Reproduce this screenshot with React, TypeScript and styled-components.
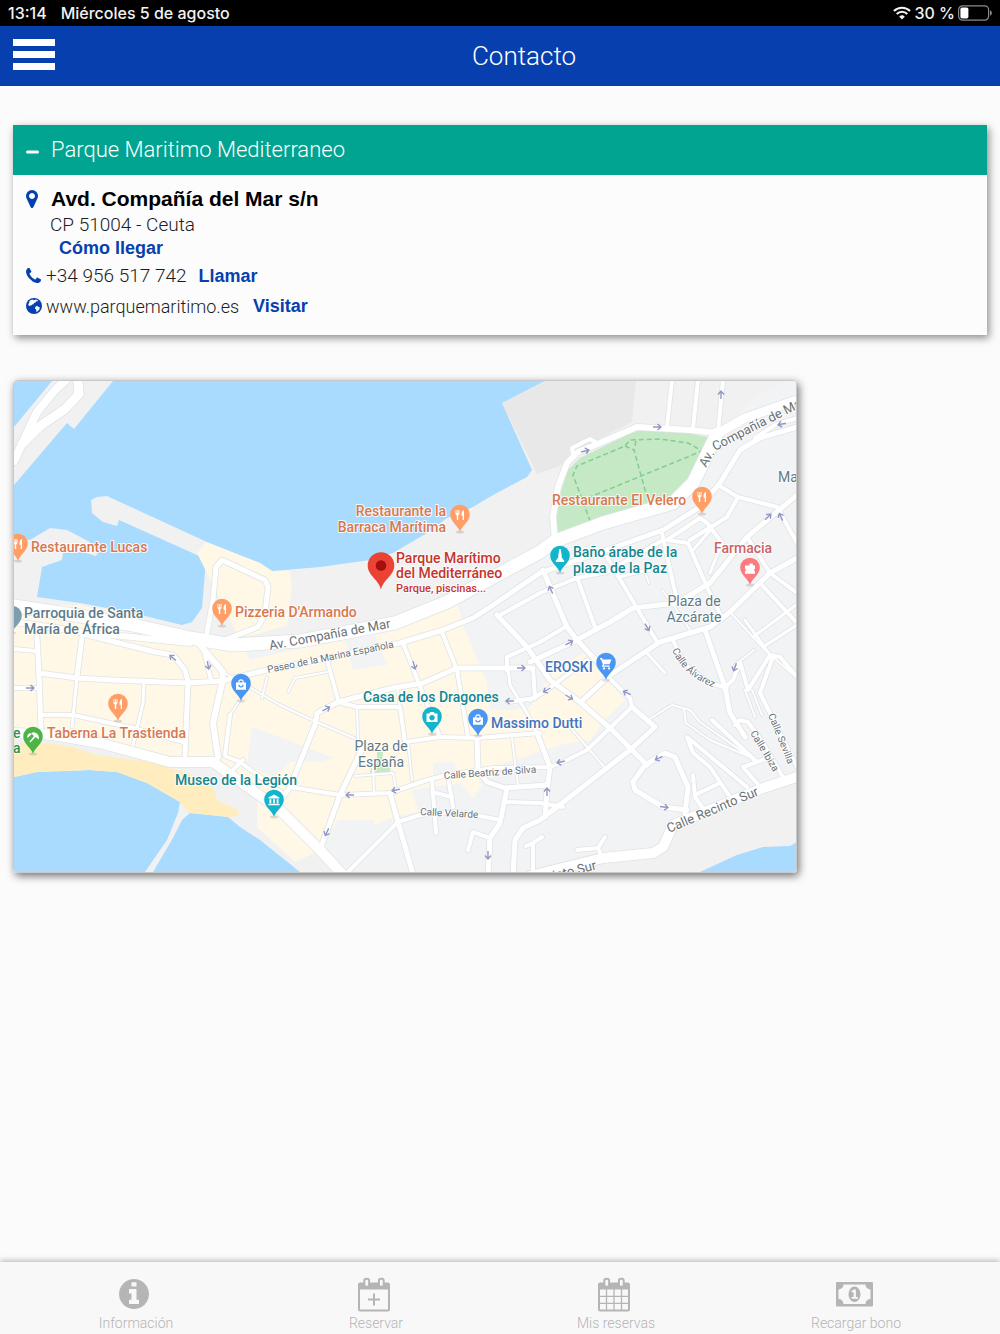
import React, { useState } from "react";
import styled, { createGlobalStyle } from "styled-components";

const LIGHT = `Roboto, "Liberation Sans", sans-serif`;
const BOLD = `"Liberation Sans", Arial, sans-serif`;

const Global = createGlobalStyle`
  *, *::before, *::after { box-sizing: border-box; }
  body { margin: 0; background: #fbfbfb; font-family: ${LIGHT}; color: #1d1d1d; }
`;

const Screen = styled.div`
  min-height: 100vh;
  display: flex;
  flex-direction: column;
`;

const StatusBar = styled.div`
  height: 26px;
  padding: 0 8px;
  display: flex;
  align-items: center;
  gap: 14px;
  background: #000;
  color: #f2f2f2;
  font: 500 16px/26px Inter, Roboto, sans-serif;
`;

const StatusRight = styled.div`
  margin-left: auto;
  display: flex;
  align-items: center;
  gap: 3px;
`;

const NavBar = styled.header`
  height: 60px;
  padding: 0 12px;
  display: grid;
  grid-template-columns: 44px 1fr;
  align-items: center;
  background: #0740ae;
  color: #fff;
`;

const MenuButton = styled.button`
  border: 0;
  padding: 0 1px;
  height: 34px;
  width: 44px;
  background: none;
  display: flex;
  flex-direction: column;
  gap: 5px;
  cursor: pointer;
`;

const MenuLine = styled.span`
  display: block;
  width: 42px;
  height: 7px;
  background: #fff;
`;

const NavTitle = styled.h1`
  margin: 0;
  padding-left: 4px;
  text-align: center;
  font-size: 26px;
  line-height: 60px;
  font-weight: 300;
`;

const Main = styled.main`
  flex: 1;
  padding: 39px 13px 60px;
  display: flex;
  flex-direction: column;
  gap: 45px;
`;

const Card = styled.section`
  background: #fcfcfc;
  box-shadow: 2px 3px 8px rgba(0, 0, 0, 0.45);
`;

const CardHeading = styled.h2`
  margin: 0;
`;

const CardToggle = styled.button`
  width: 100%;
  height: 50px;
  border: 0;
  padding: 0 13px;
  display: flex;
  align-items: center;
  gap: 12px;
  background: #00a491;
  color: #fff;
  font: 300 22px/50px ${LIGHT};
  text-align: left;
  cursor: pointer;
`;

const CardBody = styled.div`
  padding: 11px 13px 14px;
`;

const Row = styled.div<{ $indent?: number; $height?: number; $size?: number }>`
  display: flex;
  align-items: center;
  height: ${(p) => p.$height ?? 30}px;
  padding-left: ${(p) => p.$indent ?? 0}px;
  font-weight: 300;
  font-size: ${(p) => p.$size ?? 19}px;
`;

const Icon = styled.span<{ $width: number }>`
  flex: none;
  width: ${(p) => p.$width}px;
  display: inline-flex;
`;

const Street = styled.strong`
  font: 700 21px/24px ${BOLD};
  color: #000;
`;

const Action = styled.a<{ $gap?: number }>`
  margin-left: ${(p) => p.$gap ?? 0}px;
  font: 700 18px/24px ${BOLD};
  color: #0740ae;
  text-decoration: none;
`;

const MapFrame = styled.figure`
  margin: 0;
  width: 100%;
  max-width: 784px;
  border: 1px solid #c9c9c9;
  border-radius: 4px;
  overflow: hidden;
  box-shadow: 2px 3px 9px rgba(0, 0, 0, 0.55);
`;

const MapSvg = styled.svg`
  display: block;
  width: 100%;
  height: auto;
`;

const MapText = styled.text<{ $size?: number; $weight?: number }>`
  font-family: Roboto, sans-serif;
  font-size: ${(p) => p.$size ?? 14}px;
  font-weight: ${(p) => p.$weight ?? 500};
  paint-order: stroke;
  stroke: rgba(255, 255, 255, 0.85);
  stroke-width: 2px;
  stroke-linejoin: round;
`;

const TabBar = styled.nav`
  height: 72px;
  padding: 0 24px 0 16px;
  display: grid;
  grid-template-columns: repeat(4, 1fr);
  background: #f8f8f8;
  box-shadow: 0 -1px 6px rgba(0, 0, 0, 0.3);
`;

const Tab = styled.button`
  border: 0;
  padding: 13px 0 0;
  background: none;
  display: flex;
  flex-direction: column;
  align-items: center;
  color: #b5b5b5;
  font: 300 14px/20px ${LIGHT};
  cursor: pointer;
`;

const TabIcon = styled.span`
  display: block;
  height: 38px;
  padding-right: 4px;
`;

const POINTS = {
  marker:
    "M1152 640q0-106-75-181t-181-75-181 75-75 181 75 181 181 75 181-75 75-181zm256 0q0 109-33 179l-364 774q-16 33-47.5 52t-67.5 19-67.5-19-46.5-52l-365-774q-33-70-33-179 0-212 150-362t362-150 362 150 150 362z",
  phone:
    "M1600 1240q0 27-10 70.5t-21 68.5q-21 50-122 106-94 51-186 51-27 0-52.5-3.5t-57.5-12.5-47.5-14.5-55.5-20.5-49-18q-98-35-175-83-128-79-264.5-215.5t-215.5-264.5q-48-77-83-175-3-9-18-49t-20.5-55.5-14.5-47.5-12.5-57.5-3.5-52.5q0-92 51-186 56-101 106-122 25-11 68.5-21t70.5-10q14 0 21 3 18 6 53 76 11 19 30 54t35 63.5 31 53.5q3 4 17.5 25t21.5 35.5 7 28.5q0 20-28.5 50t-62 55-62 53-28.5 46q0 9 5 22.5t8.5 20.5 14 24 11.5 19q76 137 174 235t235 174q2 1 19 11.5t24 14 20.5 8.5 22.5 5q18 0 46-28.5t53-62 55-62 50-28.5q14 0 28.5 7t35.5 21.5 25 17.5q25 15 53.5 31t63.5 35 54 30q70 35 76 53 3 7 3 21z",
  info:
    "M1152 1376v-160q0-14-9-23t-23-9h-96v-512q0-14-9-23t-23-9h-320q-14 0-23 9t-9 23v160q0 14 9 23t23 9h96v320h-96q-14 0-23 9t-9 23v160q0 14 9 23t23 9h448q14 0 23-9t9-23zm-128-896v-160q0-14-9-23t-23-9h-192q-14 0-23 9t-9 23v160q0 14 9 23t23 9h192q14 0 23-9t9-23zm640 416q0 209-103 385.5t-279.5 279.5-385.5 103-385.5-103-279.5-279.5-103-385.5 103-385.5 279.5-279.5 385.5-103 385.5 103 279.5 279.5 103 385.5z",
};

const MarkerIcon = () => (
  <svg width="12" height="18" viewBox="384 128 1024 1536" fill="#0740ae" aria-hidden="true">
    <path d={POINTS.marker} />
  </svg>
);

const PhoneIcon = () => (
  <svg width="15" height="15" viewBox="192 128 1408 1408" fill="#0740ae" aria-hidden="true">
    <path d={POINTS.phone} />
  </svg>
);

const GlobeIcon = () => (
  <svg width="16" height="16" viewBox="0 0 16 16" aria-hidden="true">
    <circle cx="8" cy="8" r="8" fill="#0740ae" />
    <path
      d="M4.600 2 7.200 1.600 7.600 2.600 9.800 1.600 12.200 2.500 11.200 3.400 10 3.300 9.600 4.600 8 5 7.500 6.300 6 6.600 5.400 7.600 4.300 7.300 3.700 8.200 2.600 7.600 2.400 6 3.400 4.600 3 4zM9.600 8.400 11.300 7.800 12 8.800 13.800 9.300 13.400 11.600 11.400 13.600 10.200 13.800 10.400 12 9 10.600z"
      fill="#fcfcfc"
    />
  </svg>
);

const WifiIcon = () => (
  <svg width="18" height="14" viewBox="0 0 18 14" fill="none" stroke="#f2f2f2" strokeWidth="2.1" aria-hidden="true">
    <path d="M.9 5.1a11.5 11.5 0 0 1 16.2 0M3.7 8a7.5 7.5 0 0 1 10.600 0" />
    <path d="M9 13.500 6.200 10.700a4 4 0 0 1 5.600 0z" fill="#f2f2f2" stroke="none" />
  </svg>
);

const BatteryIcon = () => (
  <svg width="34" height="16" viewBox="0 0 34 16" aria-hidden="true">
    <rect x=".6" y=".8" width="30" height="14.400" rx="4" fill="none" stroke="#8a8a8a" strokeWidth="1.200" />
    <rect x="2.400" y="2.600" width="8" height="10.800" rx="1.600" fill="#fff" />
    <path d="M32 5.200a3 3 0 0 1 0 5.600z" fill="#8a8a8a" />
  </svg>
);

const InfoIcon = () => (
  <svg width="30" height="38" viewBox="0 0 30 38" fill="#b5b5b5" aria-hidden="true">
    <svg y="4" width="30" height="30" viewBox="128 128 1536 1536">
      <path d={POINTS.info} />
    </svg>
  </svg>
);

const CalendarFrame = () => (
  <>
    <path
      fillRule="evenodd"
      d="M2 7.500h28a2 2 0 0 1 2 2V34.500a2 2 0 0 1-2 2H2a2 2 0 0 1-2-2V9.500a2 2 0 0 1 2-2zM2 14.500v20h28V14.500z"
    />
    <rect x="6.300" y="3.800" width="4.800" height="8" rx="2" fill="#f8f8f8" stroke="#b5b5b5" strokeWidth="2" />
    <rect x="20.900" y="3.800" width="4.800" height="8" rx="2" fill="#f8f8f8" stroke="#b5b5b5" strokeWidth="2" />
  </>
);

const CalendarPlusIcon = () => (
  <svg width="32" height="38" viewBox="0 0 32 38" fill="#b5b5b5" aria-hidden="true">
    <CalendarFrame />
    <path d="M15 18.500h2v5h5v2h-5v5h-2v-5h-5v-2h5z" />
  </svg>
);

const CalendarGridIcon = () => (
  <svg width="32" height="38" viewBox="0 0 32 38" fill="#b5b5b5" aria-hidden="true">
    <CalendarFrame />
    <path d="M8.500 14v22M16 14v22M23.500 14v22M1 21.300h30M1 28.300h30" stroke="#b5b5b5" strokeWidth="1.300" />
  </svg>
);

const MoneyIcon = () => (
  <svg width="37" height="38" viewBox="0 0 37 38" fill="#b5b5b5" aria-hidden="true">
    <path
      fillRule="evenodd"
      d="M1.200 7h34.600a1.200 1.200 0 0 1 1.200 1.200v22a1.200 1.200 0 0 1-1.200 1.200H1.200A1.200 1.200 0 0 1 0 30.200v-22a1.200 1.200 0 0 1 1.200-1.200zM7.500 9.500a5 5 0 0 1-5 5v9.500a5 5 0 0 1 5 5h22a5 5 0 0 1 5-5V14.500a5 5 0 0 1-5-5z"
    />
    <ellipse cx="18.500" cy="19.200" rx="6" ry="7.800" />
    <path d="M17.700 14.500h2.200V22h2v1.800h-6.300V22h2v-4.800h-2v-1.500q1.600-.2 2.100-1.200z" fill="#f8f8f8" />
  </svg>
);

/* Streets of the map, as [path, width]. */
const ROADS: [string, number][] = [
  ["M14 461 22 444 37 412 55 390 66 380", 8],
  ["M78 380 79 394 65 409 40 426 22 444", 9],
  ["M223 672 280 705 312 720 354 738", 2],
  ["M240 700 230 715", 2],
  ["M267 677 262 698", 2],
  ["M288 692 295 678 327 672", 2],
  ["M357 707 358 740", 2],
  ["M355 776 393 773 396 790M373 765 374 793", 2],
  ["M397 688 400 707M408 742 412 780", 2],
  ["M512 738 518 785", 2],
  ["M648 720 672 705 690 710 700 722 757 762", 2],
  ["M684 710 686 723 710 740 750 757", 2],
  ["M570 727 605 768", 2],
  ["M644 570 649 583", 2],
  ["M662 590 672 603 690 630M730 612 765 650 796 677", 2],
  ["M745 690 755 717M752 690 762 715M754 650 735 665", 2],
  ["M207 632 213 600 216 567 222 560 265 580 268 587 265 614 258 627 217 643", 5],
  ["M83 634 155 652 173 655 185 670 188 682", 5],
  ["M14 649 36 651", 4],
  ["M37 637 39 675 41 730", 5],
  ["M14 688 39 688", 4],
  ["M82 637 77 677", 5],
  ["M77 677 72 727", 3],
  ["M42 715 73 715 133 728 183 742", 4],
  ["M144 683 143 703 133 745", 3],
  ["M188 682 185 755", 5],
  ["M200 645 223 672 222 683 213 723 218 757", 6],
  ["M203 647 211 680", 4],
  ["M230 715 225 755", 4],
  ["M225 756 240 762 282 793M233 770 243 760", 4],
  ["M39 673 77 678 113 680 187 683 222 681 267 670 327 658 400 643 443 630 473 618 490 607 540 573 607 550 663 530 700 507 720 483 740 450 760 438 797 427", 5],
  ["M755 438 775 425 797 418", 4],
  ["M327 660 338 700", 4],
  ["M277 806 290 787 315 725 317 713 338 702 393 688 423 683 457 668 533 668", 5],
  ["M338 702 357 707 400 707 405 742", 4],
  ["M405 742 440 737 477 738 540 733", 4],
  ["M403 643 440 737", 4],
  ["M442 632 457 670 468 737", 4],
  ["M477 738 478 770 487 782 505 788 547 785", 5],
  ["M290 787 340 795 390 793 427 780 447 775 493 768 550 767 563 762 587 750 610 728 632 707 630 698 608 677", 4],
  ["M320 850 340 795 363 747", 5],
  ["M390 793 398 822 413 874", 5],
  ["M348 872 398 822 420 815 460 812 500 820", 4],
  ["M432 780 436 833M432 792 452 797M448 777 453 807", 4],
  ["M507 788 500 823 490 838 488 874", 5],
  ["M490 838 473 832 468 850", 4],
  ["M505 802 540 803 563 807", 4],
  ["M513 874 515 840 523 828 540 820 553 810 630 750 655 727 632 707", 5],
  ["M526 846 533 843 542 837M533 874 533 843", 4],
  ["M537 733 550 767 547 790 545 817", 5],
  ["M497 615 527 647 550 680 580 702 610 728 647 765", 5],
  ["M500 615 540 593 577 578 607 572 663 540", 4],
  ["M507 671 507 657 540 642 567 626", 4],
  ["M508 668 510 685 527 713 537 733", 3],
  ["M533 668 535 698 508 702M530 700 547 690 587 660", 4],
  ["M530 662 573 642 610 622 633 608 677 603 710 583 747 537 797 495", 5],
  ["M543 570 567 627 577 640 608 673", 5],
  ["M578 580 595 627", 4],
  ["M607 557 637 608 657 642", 4],
  ["M618 577 662 567", 3],
  ["M583 700 610 675 660 642 710 627 730 612 770 573 797 558", 5],
  ["M662 533 673 583 678 603", 4],
  ["M667 540 700 518 707 523 722 543M667 540 688 543 707 587 722 618", 4],
  ["M693 550 713 527", 3],
  ["M710 573 722 543", 3],
  ["M718 485 738 497 777 507 797 543M738 497 727 517 690 540", 4],
  ["M747 537 770 573 797 593M760 583 797 623", 4],
  ["M753 637 780 617 797 604M763 647 797 625M745 620 770 655", 3],
  ["M705 630 725 687 730 713 745 737", 5],
  ["M725 687 733 680 740 662 748 690 770 655 780 657 797 677M773 657 760 693 797 767", 4],
  ["M735 725 740 720 748 722 763 743 783 777", 4],
  ["M712 720 757 762 743 767 762 789M757 762 770 757", 4],
  ["M747 787 687 737 693 753 710 767 730 797", 4],
  ["M693 775 695 797 702 807M695 795 720 783", 4],
  ["M645 765 665 753 675 757 688 787 685 813M645 765 633 782 635 790 663 807 687 810", 5],
  ["M647 653 665 673", 3],
  ["M673 640 683 663 710 683 727 688", 4],
  ["M577 850 598 848 605 837M598 848 602 858", 4],
  ["M672 380 667 427M698 380 693 428M723 380 718 432", 4],
  ["M555 540 553 517 558 487 567 463 578 452 600 443 637 427 690 430 717 433", 6],
  ["M573 453 572 448 590 439 597 443", 4],
  ["M14 733 53 735 100 743 170 762 213 762 280 810 320 850 342 874", 10],
  ["M797 777 763 788 673 825 663 847 653 853 603 858 530 876", 10],
  ["M14 606 80 616 133 625 190 638 233 645 300 641 395 623 447 602 540 552 555 541 603 523 673 503 693 483 717 434", 13],
  ["M717 434 745 418 797 400", 9],
  ["M14 622 83 632 190 643", 6],
];

/* One-way arrows, as [x, y, angle]. */
const ARROWS: [number, number, number][] = [
  [30, 688, 0], [173, 658, 220], [208, 665, 80], [326, 709, -28], [414, 665, 75], [350, 795, 180],
  [396, 790, 170], [327, 832, 115], [521, 668, 0], [510, 701, 180], [488, 855, 90], [657, 427, 0],
  [585, 451, -15], [721, 395, -90], [782, 424, 170], [768, 517, -45], [781, 517, -115], [551, 590, -115],
  [647, 627, 60], [569, 643, -28], [547, 690, 150], [569, 697, 30], [627, 693, 205], [561, 762, 165],
  [547, 792, -90], [659, 758, 155], [664, 807, 8], [735, 667, 110],
];

type Glyph = "fork" | "bag" | "cart" | "camera" | "museum" | "tower" | "pharmacy" | "beach" | "none";

const GLYPHS: Record<Glyph, React.ReactNode> = {
  fork: <path d="M-4.500-22v3.500q0 1.600 1.300 1.900v4.600h1.400v-4.600q1.300-.3 1.300-1.900V-22h-1v3.300h-.7V-22h-.7v3.300h-.7V-22zM4-22.200q-2.700 1-2.500 6h1.200v4.200H4z" fill="#fff" />,
  bag: <path fillRule="evenodd" d="M-5-18.500h2.200a2.800 3.300 0 0 1 5.600 0H5v7.300H-5zM-1.700-18.500h3.400a1.700 2 0 0 0-3.400 0zM-2.700-16.200a2.700 2.700 0 0 0 5.400 0h-1.200a1.500 1.500 0 0 1-3 0z" fill="#fff" />,
  cart: <path d="M-6-22h2l.7 1.500H5.500l-2 4.800h-5.200l-.6 1.200h6v1.200h-8l1.200-2.500-2-5h-.9zM-2-12.800a1.200 1.200 0 1 0 .01 0zM3-12.800a1.200 1.200 0 1 0 .01 0z" fill="#fff" />,
  camera: <path fillRule="evenodd" d="M-5.500-20.500h2.700l1-1.500h3.600l1 1.500h2.700v8.500h-11zM0-19a2.700 2.700 0 1 0 .01 0z" fill="#fff" />,
  museum: <path d="M0-22.500 5.500-19.500v1h-11v-1zM-4.500-17.700h1.800v4h-1.800zM-.9-17.700h1.800v4H-.9zM2.700-17.700h1.800v4H2.700zM-5.500-13.200h11v1.400h-11z" fill="#fff" />,
  tower: <path d="M-.7-24h1.400l.5 3 .8 6.500h1.200v1.500h1V-11h-8.400v-2h1v-1.500H-2l.8-6.500z" fill="#fff" />,
  pharmacy: <path d="M-4.500-19.500h4v-2h3l.7 2h1.800v3l-1 1.500 1 1.500v2.200h-10v-2.200l1-1.500-1-1.500v-3z" fill="#fff" />,
  beach: <path d="M-5.500-16q-1-3.500 2.500-5l1.500 1.500zM-2-20.800q3-2 6.500.8 2 2 1.500 5.500L2.500-17l-5 5.500-1-1L1-18z" fill="#fff" />,
  none: null,
};

const PINS: [number, number, string, Glyph][] = [
  [18, 561, "#ff9e67", "fork"],
  [222, 626, "#ff9e67", "fork"],
  [460, 532, "#ff9e67", "fork"],
  [702, 514, "#ff9e67", "fork"],
  [118, 721, "#ff9e67", "fork"],
  [241, 701, "#4b96f3", "bag"],
  [478, 736, "#4b96f3", "bag"],
  [606, 680, "#4b96f3", "cart"],
  [432, 734, "#12b5cb", "camera"],
  [274, 817, "#12b5cb", "museum"],
  [560, 573, "#12b5cb", "tower"],
  [750, 585, "#fa7b80", "pharmacy"],
  [33, 754, "#4db546", "beach"],
  [12, 633, "#7b9eb0", "none"],
];

interface Label {
  t: string;
  x: number;
  y: number;
  c: string;
  a?: "start" | "middle" | "end";
  s?: number;
  w?: number;
  r?: number;
}

const ORANGE = "#d8784e";
const TEAL = "#12878f";
const SLATE = "#5f7b88";
const BLUE = "#4274bb";
const RED = "#c5352d";
const STREET = "#6b7175";

const LABELS: Label[] = [
  { t: "Restaurante Lucas", x: 31, y: 552, c: ORANGE },
  { t: "Pizzeria D'Armando", x: 235, y: 617, c: ORANGE },
  { t: "Restaurante la", x: 446, y: 516, c: ORANGE, a: "end" },
  { t: "Barraca Marítima", x: 446, y: 532, c: ORANGE, a: "end" },
  { t: "Restaurante El Velero", x: 552, y: 505, c: ORANGE },
  { t: "Taberna La Trastienda", x: 47, y: 738, c: ORANGE },
  { t: "Parque Marítimo", x: 396, y: 563, c: RED },
  { t: "del Mediterráneo", x: 396, y: 578, c: RED },
  { t: "Parque, piscinas...", x: 396, y: 592, c: RED, s: 11 },
  { t: "Baño árabe de la", x: 573, y: 557, c: TEAL },
  { t: "plaza de la Paz", x: 573, y: 573, c: TEAL },
  { t: "Casa de los Dragones", x: 363, y: 702, c: TEAL },
  { t: "Museo de la Legión", x: 175, y: 785, c: TEAL },
  { t: "Farmacia", x: 714, y: 553, c: "#c96468" },
  { t: "EROSKI", x: 545, y: 672, c: BLUE },
  { t: "Massimo Dutti", x: 491, y: 728, c: BLUE },
  { t: "Parroquia de Santa", x: 24, y: 618, c: SLATE },
  { t: "María de África", x: 24, y: 634, c: SLATE },
  { t: "Plaza de", x: 694, y: 606, c: SLATE, a: "middle", w: 400 },
  { t: "Azcárate", x: 694, y: 622, c: SLATE, a: "middle", w: 400 },
  { t: "Plaza de", x: 381, y: 751, c: SLATE, a: "middle", w: 400 },
  { t: "España", x: 381, y: 767, c: SLATE, a: "middle", w: 400 },
  { t: "Ma", x: 778, y: 482, c: SLATE, w: 400 },
  { t: "e", x: 13, y: 738, c: "#2f8f4c" },
  { t: "a", x: 13, y: 753, c: "#2f8f4c" },
  { t: "Av. Compañía de Mar", x: 270, y: 650, c: STREET, s: 13, w: 400, r: -10.5 },
  { t: "Paseo de la Marina Española", x: 268, y: 673, c: STREET, s: 10, w: 400, r: -11.5 },
  { t: "Calle Beatriz de Silva", x: 444, y: 779, c: STREET, s: 10, w: 400, r: -4 },
  { t: "Calle Velarde", x: 420, y: 815, c: STREET, s: 10, w: 400, r: 3 },
  { t: "Calle Recinto Sur", x: 669, y: 833, c: STREET, s: 13, w: 400, r: -23 },
  { t: "into Sur", x: 554, y: 880, c: STREET, s: 13, w: 400, r: -14 },
  { t: "Av.", x: 706, y: 468, c: STREET, s: 13, w: 400, r: -60 },
  { t: "Compañía de Ma", x: 715, y: 451, c: STREET, s: 13, w: 400, r: -27 },
  { t: "Calle Sevilla", x: 768, y: 715, c: STREET, s: 10, w: 400, r: 68 },
  { t: "Calle Ibiza", x: 750, y: 733, c: STREET, s: 10, w: 400, r: 59 },
];

const CityMap = () => (
  <MapSvg viewBox="14 381 782 491" role="img" aria-label="Mapa de Ceuta">
    <rect x="14" y="381" width="782" height="491" fill="#a9daff" />
    <g fill="#f1f1f1">
      <path d="M14 427 52 381H113L74 429 67 423 14 485z" />
      <path d="M14 537 30 540 50 528 67 530 88 541 99 550 96 556 83 552 63 553 62 560 42 567 37 597 80 603 133 613 182 625 192 622 202 608 206 560 197 555 119 520 117 526 103 522 92 513 91 500 97 497 107 496 207 542 260 563 272 571 320 567 370 560 393 553 410 543 427 533 447 518 473 507 493 495 527 477 532 470 502 403 545 381H797V842L790 846 763 847 737 855 700 872H300L260 840 240 827 228 817 190 813 182 820 173 838 153 872H145L167 840 178 813 180 802 147 783 117 772 90 770 37 772 14 777z" />
    </g>
    <path d="M502 403 545 381H636L632 422 597 440 570 453 562 465 537 474z" fill="#e8e8e8" />
    <path d="M783 381H797V780L670 830 655 852 530 872H345L230 770 14 735V640L250 650 460 600 560 545 690 503 720 440 750 400z" fill="#f2f3f5" />
    <path
      d="M197 553 206 542 260 563 272 571 289 571 292 585 287 625 255 635 210 640 150 622 80 605H14V735L100 745 213 762 257 800 257 827 295 862 320 850 338 820 373 820 375 825 393 817 418 812 412 790 460 783 473 798 482 786 476 772 530 755 560 745 590 740 605 720 625 700 583 653 553 672 530 707 513 710 490 710 487 683 463 625 457 603 400 625 250 660z"
      fill="#fff8e7"
    />
    <path d="M345 640 375 635 387 665 353 670zM252 727 293 742 333 758 320 762 290 762 273 777 247 765zM433 763 455 762 456 772 433 777z" fill="#f2f3f5" />
    <path
      d="M14 743H50L73 747 97 755 150 762 193 775 213 787 217 800 238 810 239 815 230 817 190 813 180 802 147 783 117 772 90 770 37 772 14 777z"
      fill="#ffedc0"
    />
    <path d="M377 752H383L382 763 391 764 390 773 370 774 371 763 377 762z" fill="#c5e8c5" />
    <path
      d="M637 430 690 433 710 438 683 493 663 505 570 537 555 533 557 503 568 470 580 458z"
      fill="#c5e8c5"
    />
    <path
      d="M593 529 573 475 577 466 625 446 630 440 660 439 688 443 702 451 590 497M625 446 634 450 647 497M636 441 634 450M634 514 683 492 702 451"
      fill="none"
      stroke="#86cb91"
      strokeWidth="1.500"
      strokeDasharray="5 3"
    />
    <g fill="none" stroke="#e1e3e6" strokeLinecap="round" strokeLinejoin="round">
      {ROADS.map(([d, w]) => (
        <path key={d} d={d} strokeWidth={w + 1.6} />
      ))}
    </g>
    <g fill="none" stroke="#fff" strokeLinecap="round" strokeLinejoin="round">
      {ROADS.map(([d, w]) => (
        <path key={d} d={d} strokeWidth={w} />
      ))}
    </g>
    <g fill="none" stroke="#9297c4" strokeWidth="1.400">
      {ARROWS.map(([x, y, r]) => (
        <path key={`${x}-${y}`} d="M-4 0H4M.5-3 4 0 .5 3" transform={`translate(${x} ${y}) rotate(${r})`} />
      ))}
    </g>
    {LABELS.map((l) => (
      <MapText
        key={`${l.t}-${l.x}-${l.y}`}
        $size={l.s}
        $weight={l.w}
        fill={l.c}
        textAnchor={l.a ?? "start"}
        transform={`translate(${l.x} ${l.y}) rotate(${l.r ?? 0})`}
      >
        {l.t}
      </MapText>
    ))}
    <path id="calle-alvarez" d="M672 650Q683 677 720 690" fill="none" />
    <MapText $size={10} $weight={400} fill={STREET}>
      <textPath href="#calle-alvarez">Calle Álvarez</textPath>
    </MapText>
    {PINS.map(([x, y, color, glyph]) => (
      <g key={`${x}-${y}`} transform={`translate(${x} ${y})`}>
        <ellipse cx="0" cy="0" rx="4" ry="1.500" fill="#000" opacity=".12" />
        <path d="M0 0C-1.500-6-9.800-10-9.800-17.500a9.800 9.800 0 0 1 19.600 0C9.800-10 1.500-6 0 0z" fill={color} />
        {GLYPHS[glyph]}
      </g>
    ))}
    <g transform="translate(381 590)">
      <path d="M0 0C-1.500-10-13.300-14-13.300-24.500a13.300 13.300 0 0 1 26.600 0C13.300-14 1.500-10 0 0z" fill="#ea4335" />
      <circle cx="0" cy="-24.500" r="5.300" fill="#a50e0e" />
    </g>
  </MapSvg>
);

const TABS = [
  { label: "Información", icon: <InfoIcon /> },
  { label: "Reservar", icon: <CalendarPlusIcon /> },
  { label: "Mis reservas", icon: <CalendarGridIcon /> },
  { label: "Recargar bono", icon: <MoneyIcon /> },
];

export default function App() {
  const [open, setOpen] = useState(true);
  return (
    <Screen>
      <Global />
      <StatusBar>
        <span>13:14</span>
        <span>Miércoles 5 de agosto</span>
        <StatusRight>
          <WifiIcon />
          <span>30 %</span>
          <BatteryIcon />
        </StatusRight>
      </StatusBar>
      <NavBar>
        <MenuButton type="button" aria-label="Menú">
          <MenuLine />
          <MenuLine />
          <MenuLine />
        </MenuButton>
        <NavTitle>Contacto</NavTitle>
      </NavBar>
      <Main>
        <Card>
          <CardHeading>
            <CardToggle type="button" aria-expanded={open} onClick={() => setOpen(!open)}>
              <svg width="13" height="13" viewBox="0 0 13 13" stroke="#fff" strokeWidth="3" strokeLinecap="round" aria-hidden="true">
                <path d={open ? "M1.500 8h10" : "M1.500 7h10M6.500 2v10"} />
              </svg>
              Parque Maritimo Mediterraneo
            </CardToggle>
          </CardHeading>
          {open && (
            <CardBody>
              <Row $height={26}>
                <Icon $width={25}>
                  <MarkerIcon />
                </Icon>
                <Street>Avd. Compañía del Mar s/n</Street>
              </Row>
              <Row $height={24} $indent={24}>
                CP 51004 - Ceuta
              </Row>
              <Row $height={24} $indent={33}>
                <Action href="#como-llegar">Cómo llegar</Action>
              </Row>
              <Row $height={31}>
                <Icon $width={20}>
                  <PhoneIcon />
                </Icon>
                +34 956 517 742
                <Action href="#llamar" $gap={12}>
                  Llamar
                </Action>
              </Row>
              <Row $size={18}>
                <Icon $width={20}>
                  <GlobeIcon />
                </Icon>
                www.parquemaritimo.es
                <Action href="#visitar" $gap={14}>
                  Visitar
                </Action>
              </Row>
            </CardBody>
          )}
        </Card>
        <MapFrame>
          <CityMap />
        </MapFrame>
      </Main>
      <TabBar>
        {TABS.map((tab) => (
          <Tab key={tab.label} type="button">
            <TabIcon>{tab.icon}</TabIcon>
            {tab.label}
          </Tab>
        ))}
      </TabBar>
    </Screen>
  );
}
